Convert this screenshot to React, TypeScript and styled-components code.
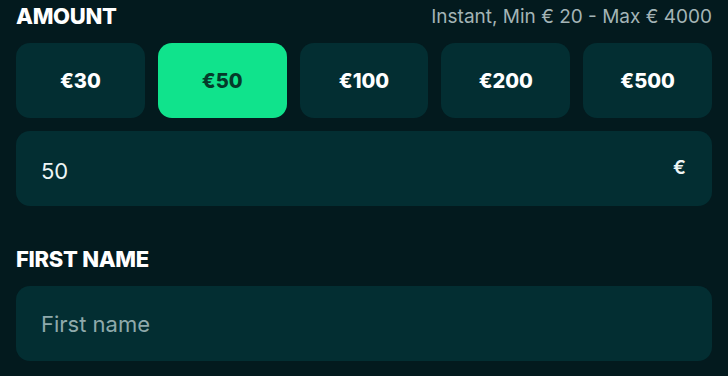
import { useState } from 'react';
import styled, { createGlobalStyle } from 'styled-components';

const GlobalStyle = createGlobalStyle`
  html, body {
    margin: 0;
    padding: 0;
    background: #031a1e;
  }
  body {
    font-family: Inter, "Noto Sans", sans-serif;
  }
`;

const amounts = [30, 50, 100, 200, 500];

const App = () => {
  const [selected, setSelected] = useState(50);
  const [name, setName] = useState('');

  return (
    <>
      <GlobalStyle />
      <Form>
        <Header>
          <Label>AMOUNT</Label>
          <Limits>Instant, Min € 20 - Max € 4000</Limits>
        </Header>
        <Presets>
          {amounts.map(a => (
            <Preset key={a} active={a === selected} onClick={() => setSelected(a)}>
              €{a}
            </Preset>
          ))}
        </Presets>
        <Field>
          <Value>{selected}</Value>
          <Currency>€</Currency>
        </Field>

        <Section>
          <Label>FIRST NAME</Label>
          <Field>
            <TextInput
              placeholder="First name"
              value={name}
              onChange={e => setName(e.target.value)}
            />
          </Field>
        </Section>
      </Form>
    </>
  );
};

export default App;

const Form = styled.div`
  display: flex;
  flex-direction: column;
  padding: 0 16px;
  color: #ffffff;
`;

const Header = styled.div`
  display: flex;
  justify-content: space-between;
  align-items: center;
  height: 32px;
  margin-bottom: 11px;
`;

const Label = styled.div`
  font-size: 22px;
  font-weight: 800;
  letter-spacing: -0.3px;
  line-height: 24px;
  color: #ffffff;
`;

const Limits = styled.div`
  font-size: 19px;
  color: #a3b4b6;
`;

const Presets = styled.div`
  display: grid;
  grid-template-columns: repeat(5, 1fr);
  gap: 13px;
  margin-bottom: 13px;
`;

const Preset = styled.button<{ active: boolean }>`
  height: 75px;
  border: none;
  border-radius: 14px;
  background: ${props => (props.active ? '#10e38c' : '#032e32')};
  color: ${props => (props.active ? '#053a2a' : '#ffffff')};
  font-family: Inter, "Noto Sans", sans-serif;
  font-size: 20px;
  font-weight: 800;
  cursor: pointer;
`;

const Field = styled.div`
  display: flex;
  align-items: center;
  justify-content: space-between;
  height: 75px;
  padding: 0 26px 0 25px;
  border-radius: 14px;
  background: #032e32;
`;

const Value = styled.div`
  font-size: 22px;
  color: #eef5f5;
  padding-top: 4px;
`;

const Currency = styled.div`
  font-size: 19px;
  font-weight: 600;
  color: #eef5f5;
  padding-bottom: 2px;
`;

const Section = styled.div`
  display: flex;
  flex-direction: column;
  gap: 15px;
  margin-top: 41px;
`;

const TextInput = styled.input`
  flex: 1;
  border: none;
  outline: none;
  background: transparent;
  font-family: Inter, "Noto Sans", sans-serif;
  font-size: 22px;
  color: #ffffff;
  padding: 0;

  &::placeholder {
    color: #8fa9ab;
  }
`;
